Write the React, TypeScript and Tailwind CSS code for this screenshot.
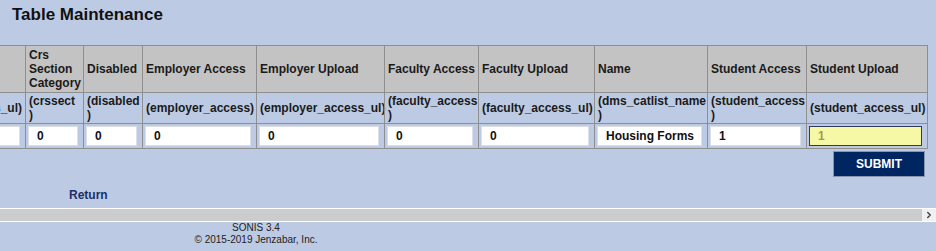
import { ChevronRight } from 'lucide-react'

type Col = {
  width: string
  label: string
  field: React.ReactNode
  value: string
}

const cols: Col[] = [
  { width: 'alumni', label: 'Alumni Upload', field: '(alumni_access_ul)', value: '' },
  { width: 'crs', label: 'Crs Section Category', field: <>(crssect<br />)</>, value: '0' },
  { width: 'dis', label: 'Disabled', field: <>(disabled<br />)</>, value: '0' },
  { width: 'ea', label: 'Employer Access', field: '(employer_access)', value: '0' },
  { width: 'eu', label: 'Employer Upload', field: '(employer_access_ul)', value: '0' },
  { width: 'fa', label: 'Faculty Access', field: <>(faculty_access<br />)</>, value: '0' },
  { width: 'fu', label: 'Faculty Upload', field: '(faculty_access_ul)', value: '0' },
  { width: 'nm', label: 'Name', field: <>(dms_catlist_name<br />)</>, value: 'Housing Forms' },
  { width: 'sa', label: 'Student Access', field: <>(student_access<br />)</>, value: '1' },
]

export default function App() {
  return (
    <div className="w-[936px] h-[251px] overflow-hidden bg-[#bccbe3] font-['Liberation_Sans',Arial,sans-serif] text-[#1a1a1a]">
      {/* Title */}
      <h1 className="h-[45px] pl-[12px] pt-[5px] text-[17px] leading-[20px] font-bold text-[#111]">
        Table Maintenance
      </h1>

      {/* Table, scrolled to the right end */}
      <div className="overflow-hidden">
        <div className="ml-[-95px] grid grid-cols-[120px_58px_59px_114px_128px_94px_116px_113px_99px_122px] grid-rows-[47px_31px_26px] text-[12px] font-bold leading-[14px]">
          {/* header row */}
          {cols.map((c, i) => (
            <div
              key={'h' + c.width}
              className="flex items-center px-[3px] bg-[#c3c3c3] border-t border-l border-[#8f8f8f]"
            >
              {i === 0 ? '' : c.label}
            </div>
          ))}
          <div className="flex items-center px-[3px] bg-[#c3c3c3] border-t border-l border-r border-[#8f8f8f]">
            Student Upload
          </div>

          {/* field name row */}
          {cols.map((c, i) => (
            <div
              key={'f' + c.width}
              className={`flex items-center px-[3px] pb-[1px] border-t border-l border-[#8f8f8f] ${i === 0 ? 'justify-end' : ''}`}
            >
              <span>{c.field}</span>
            </div>
          ))}
          <div className="flex items-center px-[3px] pb-[1px] border-t border-l border-r border-[#8f8f8f]">
            (student_access_ul)
          </div>

          {/* input row */}
          {cols.map((c) => (
            <div key={'i' + c.width} className="pl-[2px] pr-[5px] pt-[2px] border-t border-l border-b border-[#8f8f8f]">
              <input
                readOnly
                value={c.value}
                className="block w-full h-[20px] pl-[8px] bg-white border border-[#dcdfe6] text-[12px] font-bold text-[#111] outline-none"
              />
            </div>
          ))}
          <div className="pl-[2px] pr-[5px] pt-[2px] border-t border-l border-r border-b border-[#8f8f8f]">
            <input
              readOnly
              placeholder="1"
              className="block w-full h-[20px] pl-[8px] bg-[#f7f8a6] border-[1.5px] border-[#2e3b5e] text-[12px] font-bold outline-none placeholder:text-[#a69a4e]"
            />
          </div>
        </div>
      </div>

      {/* Submit */}
      <div className="flex justify-end pr-[11px] pt-[2px]">
        <button className="w-[92px] h-[26px] bg-[#002662] border border-[#8a94aa] text-white text-[12px] font-bold">
          SUBMIT
        </button>
      </div>

      {/* Return link */}
      <div className="pl-[69px] pt-[5px] h-[31px]">
        <a className="text-[12px] leading-[14px] font-bold text-[#1c2f6b] cursor-pointer">Return</a>
      </div>

      {/* Horizontal scrollbar */}
      <div className="flex h-[14px] border-y border-white bg-[#cccccc]">
        <div className="flex-1" />
        <div className="w-[14px] flex items-center justify-center bg-[#f0f0f0]">
          <ChevronRight size={10} strokeWidth={3.5} className="text-[#444]" />
        </div>
      </div>

      {/* Footer */}
      <div className="w-[512px] text-center text-[10px] leading-[12px] text-[#222]">
        <div>SONIS 3.4</div>
        <div>© 2015-2019 Jenzabar, Inc.</div>
      </div>
    </div>
  )
}
